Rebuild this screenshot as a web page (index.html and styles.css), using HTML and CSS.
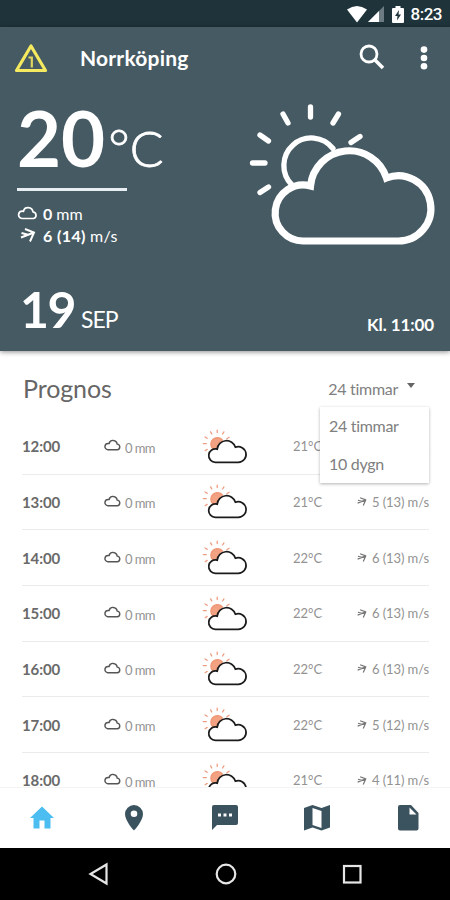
FILE: index.html
```html
<!DOCTYPE html>
<html lang="sv">
<head>
    <meta charset="UTF-8">
    <meta name="viewport" content="width=device-width, initial-scale=1.0">
    <title>Väder Norrköping</title>
    <link rel="stylesheet" href="styles.css">
</head>
<body>

    <svg class="symbols">
        <symbol id="sun-cloud" viewBox="248 102 190 146">
            <path class="rays" d="M310.500 107v10M283 114l5 9M338.500 114l-5.500 9M260 135l8.500 6M252.500 163h12.500M260 192.500l8.500-5.500M360 136.500l-9 6"/>
            <path class="sun" d="M333 148.500A27.500 27.500 0 1 0 292 185L312 186Z"/>
            <path class="sun-edge" d="M333 148.500A27.500 27.500 0 1 0 292 185"/>
            <path class="cloud" d="M304 241H398A32.600 32.600 0 1 0 386.500 178A39 39 0 0 0 310.500 186A28 28 0 1 0 304 241Z"/>
        </symbol>
        <symbol id="rain-cloud" viewBox="0 0 20 14">
            <path d="M4.500 12.500H16A3.300 3.300 0 0 0 15.500 6C14.800 0.500 7 0 6 5.300C0 4.500-0.500 12 4.500 12.500Z" fill="none" stroke="currentColor" stroke-width="1.7" stroke-linejoin="round"/>
        </symbol>
        <symbol id="wind-arrow" viewBox="0 0 16 14">
            <path d="M1 9.500L14 4.500M5 1L14 4.500L10 13.500M1.500 5L8 6.800" fill="none" stroke="currentColor" stroke-width="2"/>
        </symbol>
    </svg>

    <div class="status-bar">
        <svg class="wifi" viewBox="0 0 20 17"><path d="M0 3.500Q10-3.500 20 3.500L10 16.500Z" fill="#fff"/></svg>
        <svg class="signal" viewBox="0 0 16 16"><path d="M0 16L16 0V16Z" fill="#6d7c82"/><path d="M0 16L11 5V16Z" fill="#fff"/></svg>
        <svg class="battery" viewBox="0 0 12 17"><path d="M1 2H3.500V0H8.500V2H11Q12 2 12 3V16Q12 17 11 17H1Q0 17 0 16V3Q0 2 1 2Z" fill="#fff"/><path d="M7 4L3 10H5.500L5 14.500L9 8.500H6.500Z" fill="#1f333b"/></svg>
        <span>8:23</span>
    </div>

    <header class="current">
        <div class="toolbar">
            <svg class="warning" viewBox="0 0 34 30">
                <path d="M17 3L31.500 27.500H2.500Z" fill="none" stroke="#f5e960" stroke-width="3.2" stroke-linejoin="round"/>
                <path d="M14.500 14.500H17.800V24.500" fill="none" stroke="#e0d65f" stroke-width="2.2"/>
            </svg>
            <h1>Norrköping</h1>
            <svg class="search" viewBox="0 0 26 26"><circle cx="10" cy="10" r="8" fill="none" stroke="#fff" stroke-width="2.800"/><path d="M15.500 15.500L24 24" stroke="#fff" stroke-width="3.600"/></svg>
            <svg class="more" viewBox="0 0 8 24"><circle cx="4" cy="3.600" r="3.300"/><circle cx="4" cy="12" r="3.300"/><circle cx="4" cy="20.300" r="3.300"/></svg>
        </div>

        <div class="now">
            <div class="readings">
                <div class="temperature"><strong>20</strong><span class="degree">°</span><span class="celsius">C</span></div>
                <div class="line"></div>
                <div class="detail"><svg class="detail-rain"><use href="#rain-cloud"/></svg><b>0</b>mm</div>
                <div class="detail"><svg class="detail-wind"><use href="#wind-arrow"/></svg><b>6 (14)</b>m/s</div>
            </div>
            <svg class="now-icon"><use href="#sun-cloud"/></svg>
        </div>

        <div class="date">
            <div class="day"><strong>19</strong><span>SEP</span></div>
            <div class="clock">Kl. 11:00</div>
        </div>
    </header>

    <main class="forecast">
        <div class="forecast-header">
            <h2>Prognos</h2>
            <div class="select">
                <span>24 timmar</span><i class="caret"></i>
                <ul class="menu">
                    <li>24 timmar</li>
                    <li>10 dygn</li>
                </ul>
            </div>
        </div>
        <div id="hours">
            <!-- Timmarna läggs in här -->
        </div>
    </main>

    <nav class="tabs">
        <svg viewBox="0 0 28 28" class="active"><path d="M14 2.500L26 14H22.500V24.500H16.500V16.500H11.500V24.500H5.500V14H2Z"/></svg>
        <svg viewBox="0 0 28 28"><path fill-rule="evenodd" d="M14 1A9 9 0 0 0 5 10C5 17 14 26.500 14 26.500S23 17 23 10A9 9 0 0 0 14 1ZM14 6.500A3.300 3.300 0 1 1 14 13.100A3.300 3.300 0 1 1 14 6.500Z"/></svg>
        <svg viewBox="0 0 28 28"><path fill-rule="evenodd" d="M3 1H25Q27 1 27 3V19Q27 21 25 21H6L1 26V3Q1 1 3 1ZM7 9.500V12.500H10V9.500ZM12.500 9.500V12.500H15.500V9.500ZM18 9.500V12.500H21V9.500Z"/></svg>
        <svg viewBox="0 0 28 28"><path fill-rule="evenodd" d="M1 4L9.500 1L18.500 4L27 1V23.500L18.500 26.500L9.500 23.500L1 26.500ZM9.500 4V21L18.500 24V7Z"/></svg>
        <svg viewBox="0 0 28 28"><path fill-rule="evenodd" d="M6 1H17L24.500 9V24.500Q24.500 26.500 22.500 26.500H6Q4 26.500 4 24.500V3Q4 1 6 1ZM15.500 3.500V10.500H22.500Z"/></svg>
    </nav>

    <div class="system-nav">
        <svg viewBox="0 0 24 24"><path d="M19.500 2.500V21.500L3.500 12Z"/></svg>
        <svg viewBox="0 0 24 24"><circle cx="12" cy="12" r="9.300"/></svg>
        <svg viewBox="0 0 24 24"><rect x="4" y="4" width="16.500" height="16.500"/></svg>
    </div>

    <script>
        const hours = [
            { time: '12:00', rain: 0, temp: 21, wind: '5 (13)' },
            { time: '13:00', rain: 0, temp: 21, wind: '5 (13)' },
            { time: '14:00', rain: 0, temp: 22, wind: '6 (13)' },
            { time: '15:00', rain: 0, temp: 22, wind: '6 (13)' },
            { time: '16:00', rain: 0, temp: 22, wind: '6 (13)' },
            { time: '17:00', rain: 0, temp: 22, wind: '5 (12)' },
            { time: '18:00', rain: 0, temp: 21, wind: '4 (11)' }
        ];

        document.getElementById('hours').innerHTML = hours.map(hour => `
            <div class="hour">
                <span class="time">${hour.time}</span>
                <span class="rain"><svg><use href="#rain-cloud"/></svg>${hour.rain} mm</span>
                <svg class="hour-icon"><use href="#sun-cloud"/></svg>
                <span class="temp">${hour.temp}°C</span>
                <span class="wind"><svg><use href="#wind-arrow"/></svg>${hour.wind} m/s</span>
            </div>
        `).join('');
    </script>

</body>
</html>
```
FILE: styles.css
```css
* {
    box-sizing: border-box;
}

body {
    font-family: Lato, "Liberation Sans", sans-serif;
    font-variant-ligatures: none;
    background-color: #fff;
    margin: 0;
    height: 900px;
    display: flex;
    flex-direction: column;
    overflow: hidden;
}

svg {
    display: block;
    flex: none;
}

.symbols {
    position: absolute;
    width: 0;
    height: 0;
}

.status-bar {
    flex: none;
    height: 27px;
    background-color: #1f333b;
    color: #fff;
    display: flex;
    align-items: center;
    justify-content: flex-end;
    padding: 1px 8px 0 0;
    font: 500 17px Roboto, sans-serif;
    letter-spacing: -0.5px;
}

.wifi {
    width: 20px;
    height: 17px;
}

.signal {
    width: 16px;
    height: 16px;
    margin: 0 8px 0 1px;
}

.battery {
    width: 12px;
    height: 17px;
    margin-right: 7px;
}

.current {
    flex: none;
    height: 324px;
    background-color: #465a63;
    color: #fff;
    box-shadow: 0 1px 5px rgba(0, 0, 0, 0.45);
    position: relative;
}

.toolbar {
    height: 62px;
    display: flex;
    align-items: center;
    padding: 0 22px 0 14px;
}

.warning {
    width: 34px;
    height: 30px;
}

.toolbar h1 {
    flex: 1;
    margin: -2px 0 0 32px;
    font-size: 21px;
    font-weight: 700;
    letter-spacing: 0.2px;
}

.search {
    width: 26px;
    height: 26px;
    margin: -2px 35px 0 0;
}

.more {
    width: 8px;
    height: 24px;
    fill: #fff;
}

.now {
    height: 176px;
    display: flex;
    justify-content: space-between;
    padding: 13px 12px 0 17px;
}

.temperature {
    display: flex;
    align-items: baseline;
    height: 88px;
    margin-top: -2px;
    line-height: 76px;
    font-size: 76px;
}

.temperature strong {
    font-weight: 700;
}

.degree,
.celsius {
    font-size: 50px;
    font-weight: 300;
    -webkit-text-stroke: 0.8px #fff;
}

.degree {
    font-size: 52px;
    margin: 0 0 0 3px;
}

.line {
    width: 110px;
    height: 3px;
    background-color: #e9eef3;
    margin-bottom: 11px;
}

.detail {
    display: flex;
    align-items: center;
    height: 22px;
    font-size: 16px;
}

.detail b {
    margin: 0 4px 0 5px;
}

.detail:last-child {
    letter-spacing: 0.4px;
}

.detail-rain {
    width: 21px;
    height: 14px;
}

.detail-wind {
    width: 16px;
    height: 14px;
    margin: 0 2px 0 3px;
}

.now-icon {
    width: 190px;
    height: 146px;
    --cloud: #fff;
    --cloud-fill: #465a63;
    --sun: none;
    --sun-edge: #fff;
    --rays: #fff;
}

.rays,
.sun-edge {
    fill: none;
    stroke: var(--rays);
    stroke-width: 5.3;
    stroke-linecap: round;
}

.sun-edge {
    stroke: var(--sun-edge);
}

.sun {
    fill: var(--sun);
}

.cloud {
    fill: var(--cloud-fill);
    stroke: var(--cloud);
    stroke-width: 7.2;
}

.date {
    display: flex;
    justify-content: space-between;
    align-items: flex-start;
    padding: 14px 16px 0 20px;
}

.day strong {
    font-size: 50px;
    line-height: 60px;
    letter-spacing: -1.5px;
}

.day span {
    font-size: 23px;
    margin-left: 6px;
    letter-spacing: -1px;
}

.clock {
    font-size: 17px;
    font-weight: 700;
    letter-spacing: -0.1px;
    padding-top: 35px;
}

.forecast {
    flex: 1;
    min-height: 0;
    overflow: hidden;
    padding: 0 21px 0 22px;
}

.forecast-header {
    height: 68px;
    display: flex;
    align-items: center;
    justify-content: space-between;
    padding: 6px 12px 0 0;
    color: #666;
}

.forecast-header h2 {
    margin: 0 0 0 1px;
    font-size: 25px;
    font-weight: 400;
    letter-spacing: -0.1px;
}

.select {
    position: relative;
    display: flex;
    align-items: center;
    font-size: 16px;
    letter-spacing: -0.3px;
    color: #808080;
}

.caret {
    border: 4px solid transparent;
    border-top: 5px solid #666;
    border-bottom: 0;
    margin: -5px 2px 0 9px;
}

/* öppnad lista över raderna */
.menu {
    position: absolute;
    top: 28px;
    right: -12px;
    width: 109px;
    height: 76px;
    margin: 0;
    padding: 0 0 0 9px;
    list-style: none;
    background-color: #fff;
    box-shadow: 0 1px 3px rgba(0, 0, 0, 0.3);
}

.menu li {
    line-height: 38px;
}

.hour {
    height: 55.65px;
    display: grid;
    grid-template-columns: 82px 98px 91px 1fr auto;
    align-items: center;
    border-bottom: 1.5px solid #eaecec;
    color: #929292;
    font-size: 13px;
}

.time {
    font-size: 15px;
    font-weight: 700;
    color: #6a6a6a;
    letter-spacing: -0.1px;
}

.rain,
.wind {
    display: flex;
    align-items: center;
}

.rain {
    padding-top: 3px;
    letter-spacing: -0.6px;
}

.rain svg {
    width: 17px;
    height: 12px;
    margin: -5px 4px 0 0;
    color: #555;
}

.wind {
    letter-spacing: -0.1px;
}

.wind svg {
    width: 10px;
    height: 9px;
    margin-right: 5px;
    color: #777;
}

.hour-icon {
    width: 46px;
    height: 35px;
    --cloud: #1c1c1c;
    --cloud-fill: #fff;
    --sun: #f2a283;
    --sun-edge: #ee9674;
    --rays: #ee9c80;
}

.tabs {
    flex: none;
    height: 61px;
    background-color: #fff;
    border-top: 1px solid #f4f4f4;
    display: flex;
    justify-content: space-between;
    align-items: center;
    padding: 0 28px;
    fill: #3b535e;
}

.tabs svg {
    width: 28px;
    height: 28px;
}

.tabs .active {
    fill: #4bbdf0;
}

.system-nav {
    flex: none;
    height: 52px;
    background-color: #000;
    display: flex;
    justify-content: space-between;
    align-items: center;
    padding: 0 86px 0 87px;
}

.system-nav svg {
    width: 24px;
    height: 24px;
    fill: none;
    stroke: #e6e6e6;
    stroke-width: 2.2;
}
```
